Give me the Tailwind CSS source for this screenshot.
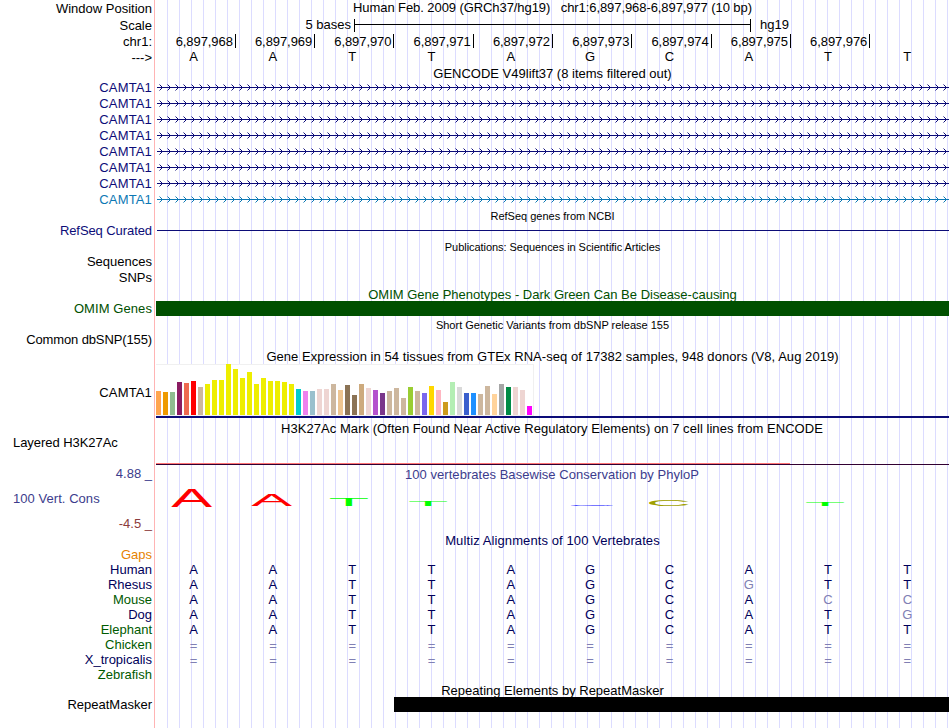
<!DOCTYPE html>
<html lang="en">
<head>
  <meta charset="UTF-8">
  <meta name="viewport" content="width=device-width, initial-scale=1.0">
  <title>Human chr1:6,897,968-6,897,977</title>
  <script src="https://cdn.jsdelivr.net/npm/@tailwindcss/browser@4"></script>
</head>
<body class="bg-white">
  <div class="flex w-[949px] h-[728px] overflow-hidden text-[13px] leading-4 text-black whitespace-nowrap font-['Liberation_Sans',Arial,sans-serif]">

    <!-- Track labels -->
    <div class="w-[155px] shrink-0 border-r border-[#ffb4b4] pr-[2px] flex flex-col text-right">
      <div class="h-[17px] leading-[17px]">Window Position</div>
      <div class="h-[17px] leading-[17px]">Scale</div>
      <div class="h-4">chr1:</div>
      <div class="h-[30px]">---&gt;</div>
      <div class="h-[142px] text-[#0c0c78] tracking-[0.15px]">
        <div>CAMTA1</div>
        <div>CAMTA1</div>
        <div>CAMTA1</div>
        <div>CAMTA1</div>
        <div>CAMTA1</div>
        <div>CAMTA1</div>
        <div>CAMTA1</div>
        <div class="text-[#0c78b4]">CAMTA1</div>
      </div>
      <div class="h-[31px] pt-px text-[#0c0c78] tracking-[-0.08px]">RefSeq Curated</div>
      <div class="h-4 pt-px">Sequences</div>
      <div class="h-[31px] pt-px">SNPs</div>
      <div class="h-[31px] pt-px text-[#005000] tracking-[0.08px]">OMIM Genes</div>
      <div class="h-[53px] pt-px tracking-[-0.12px]">Common dbSNP(155)</div>
      <div class="h-[50px] pt-px tracking-[0.15px]">CAMTA1</div>
      <div class="h-8 pl-[13px] pt-px text-left tracking-[-0.05px]">Layered H3K27Ac</div>
      <div class="h-6 text-[#3c3c8c]">4.88 _</div>
      <div class="h-[25px] pl-[13px] pt-px text-left text-[#3c3c8c] tracking-[0.05px]">100 Vert. Cons</div>
      <div class="h-8 pt-px text-[#8c3c3c]">-4.5 _</div>
      <div class="h-[149px] leading-[15px] text-[#00005a]">
        <div class="text-[#e68200]">Gaps</div>
        <div>Human</div>
        <div>Rhesus</div>
        <div class="text-[#005a00]">Mouse</div>
        <div>Dog</div>
        <div class="text-[#005a00]">Elephant</div>
        <div class="text-[#005a00]">Chicken</div>
        <div>X_tropicalis</div>
        <div class="text-[#005a00]">Zebrafish</div>
      </div>
      <div class="pt-px">RepeatMasker</div>
    </div>

    <!-- Tracks, over 12px guidelines -->
    <div class="w-[794px] shrink-0 border-l border-white flex flex-col bg-[repeating-linear-gradient(to_right,transparent_0px,transparent_11px,#dcdcff_11px,#dcdcff_12px)]">
      <div class="h-[17px] text-center whitespace-pre tracking-[-0.08px]">Human Feb. 2009 (GRCh37/hg19)   chr1:6,897,968-6,897,977 (10 bp)</div>

      <!-- Scale bar -->
      <div class="h-[17px] flex">
        <div class="w-[195px] text-right">5 bases</div>
        <div class="ml-[3px] mt-[2px] w-[397px] h-[13px] border-x border-black flex flex-col justify-center pb-[2px]">
          <div class="h-px bg-black"></div>
        </div>
        <div class="ml-[9px]">hg19</div>
      </div>

      <div id="positions" class="ml-[0.5px] w-[793px] h-[15px] grid grid-cols-10 tracking-[-0.08px]"></div>
      <div id="bases" class="h-[17px] grid grid-cols-10"></div>

      <div class="h-[14px] text-center">GENCODE V49lift37 (8 items filtered out)</div>
      <div id="genes" class="h-32"></div>

      <div class="h-[22px] text-center text-[11px]">RefSeq genes from NCBI</div>
      <div class="ml-px h-px bg-[#0c0c78]"></div>
      <div class="h-[56px] pt-2 text-center text-[11px] tracking-[-0.05px]">Publications: Sequences in Scientific Articles</div>

      <div class="h-[14px] text-center text-[#005000]">OMIM Gene Phenotypes - Dark Green Can Be Disease-causing</div>
      <div class="h-[15px] bg-[#005000]"></div>
      <div class="h-[33px] pt-px text-center text-[11px]">Short Genetic Variants from dbSNP release 155</div>

      <!-- GTEx expression -->
      <div class="h-[15px] text-center tracking-[0.055px]">Gene Expression in 54 tissues from GTEx RNA-seq of 17382 samples, 948 donors (V8, Aug 2019)</div>
      <div id="tissues" class="h-[52px] w-[378px] bg-white border-t border-r border-b border-[#f0f0f0] flex items-end gap-[2px]"></div>
      <div class="h-[2px] bg-[#0c0c78]"></div>

      <div class="h-[45px] pt-[3px] pr-px text-center tracking-[0.05px]">H3K27Ac Mark (Often Found Near Active Regulatory Elements) on 7 cell lines from ENCODE</div>
      <div class="h-px w-[634px] bg-[#ff7373]"></div>
      <div class="h-px bg-[#320032]"></div>

      <!-- PhyloP logo -->
      <div class="h-[19px] pt-[2px] pr-px text-center text-[#3c3c8c] tracking-[0.04px]">100 vertebrates Basewise Conservation by PhyloP</div>
      <svg class="block h-[48px] w-[793px] text-[100px]" viewBox="156 484 793 48">
        <text transform="translate(171.2 507) scale(.614 .262)" fill="#ff0000">A</text>
        <text transform="translate(251.2 506) scale(.614 .16)" fill="#ff0000">A</text>
        <text transform="translate(328.6 506) scale(.667 .116)" fill="#00ff00">T</text>
        <text transform="translate(407.7 506) scale(.667 .073)" fill="#00ff00">T</text>
        <text transform="translate(567.3 506) scale(.644 .015)" fill="#0000ff">G</text>
        <text transform="translate(646 506) scale(.625 .096)" fill="#a0a000">C</text>
        <text transform="translate(804.7 506) scale(.667 .058)" fill="#00ff00">T</text>
      </svg>

      <div class="h-[30px] pt-px text-center text-[#00005a] tracking-[0.1px]">Multiz Alignments of 100 Vertebrates</div>
      <div id="alignments" class="h-[121px] leading-[15px]"></div>

      <div class="h-[14px] text-center">Repeating Elements by RepeatMasker</div>
      <div class="relative ml-[238px] h-[15px] bg-black"></div>
    </div>
  </div>

  <script>
    const positions = document.getElementById('positions');
    for (let i = 0; i < 9; i++) {
      positions.innerHTML += `<div class="h-[14px] border-r border-black pr-[2px] text-right">6,897,${968 + i}</div>`;
    }

    document.getElementById('bases').innerHTML = [...'AATTAGCATT']
      .map(base => `<div class="pr-[4px] text-center">${base}</div>`).join('');

    // Gene models: a line with strand arrows every 8px
    let arrows = '';
    for (let x = 5; x < 792; x += 8) {
      arrows += `M${x - 2.5} 4.5L${x + 0.5} 7.5L${x - 2.5} 10.5`;
    }
    const genes = document.getElementById('genes');
    for (let i = 0; i < 8; i++) {
      const color = i === 7 ? 'text-[#0c78b4]' : 'text-[#0c0c78]';
      genes.innerHTML += `
        <svg class="block ml-px w-[792px] h-4 ${color}" fill="none" stroke="currentColor">
          <path d="M0 7.5H792"/>
          <path d="${arrows}"/>
        </svg>`;
    }

    // [height, color] for each tissue
    const tissues = [
      [24, '#ffa54f'], [23, '#ee9a00'], [23, '#8fbc8f'], [33, '#8b1c62'], [32, '#ee6a50'], [34, '#ff0000'],
      [28, '#cdb79e'], [31, '#eeee00'], [35, '#eeee00'], [35, '#eeee00'], [51, '#eeee00'], [46, '#eeee00'],
      [37, '#eeee00'], [43, '#eeee00'], [31, '#eeee00'], [37, '#eeee00'], [34, '#eeee00'], [34, '#eeee00'],
      [33, '#eeee00'], [31, '#eeee00'], [26, '#00cdcd'], [24, '#ee82ee'], [24, '#9ac0cd'], [26, '#eed5d2'],
      [26, '#eed5d2'], [31, '#cdb79e'], [25, '#eec591'], [30, '#8b7355'], [20, '#8b7355'], [31, '#cdaa7d'],
      [27, '#eed5d2'], [25, '#b452cd'], [22, '#7a378b'], [24, '#cdb79e'], [27, '#cdb79e'], [17, '#cdb79e'],
      [28, '#9acd32'], [24, '#cdb79e'], [22, '#7a67ee'], [29, '#ffd700'], [25, '#ffb6c1'], [13, '#cd9b1d'],
      [33, '#b4eeb4'], [28, '#d9d9d9'], [22, '#3a5fcd'], [22, '#1e90ff'], [21, '#cdb79e'], [29, '#cdb79e'],
      [21, '#ffd39b'], [31, '#a6a6a6'], [28, '#008b45'], [28, '#eed5d2'], [25, '#eed5d2'], [9, '#ff00ff']
    ];
    document.getElementById('tissues').innerHTML = tissues
      .map(([h, c]) => `<div class="w-[5px] shrink-0" style="height: ${h}px; background: ${c}"></div>`).join('');

    const human = 'AATTAGCATT';
    const rows = [human, 'AATTAGCGTT', 'AATTAGCACC', 'AATTAGCATG', human, '==========', '=========='];
    // Bases that differ from human are drawn lighter
    document.getElementById('alignments').innerHTML = rows.map(row => `
      <div class="h-[15px] grid grid-cols-10 ${row[0] === '=' ? 'pt-px' : ''}">
        ${[...row].map((base, i) => `<div class="pr-[4px] text-center ${base === human[i] ? 'text-[#00005a]' : 'text-[#8080b4]'}">${base}</div>`).join('')}
      </div>`).join('');
  </script>
</body>
</html>
